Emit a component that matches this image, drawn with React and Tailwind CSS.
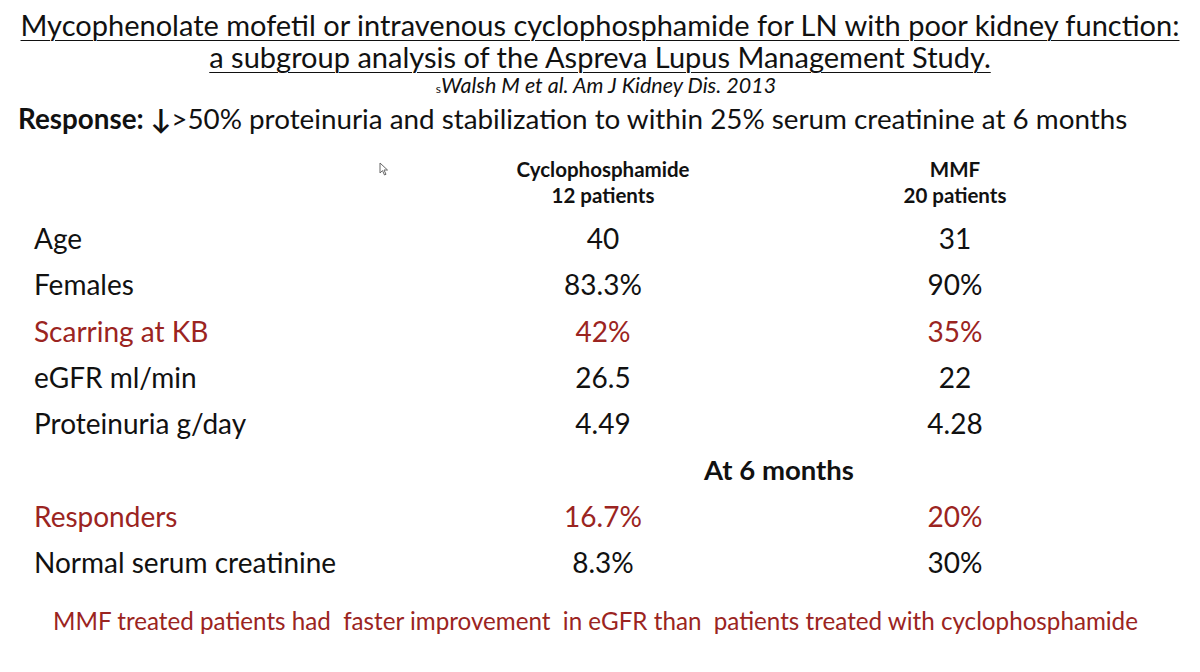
import React from 'react';

const RED = 'text-[#9b2421]';

const rows = [
  { label: 'Age', a: '40', b: '31' },
  { label: 'Females', a: '83.3%', b: '90%' },
  { label: 'Scarring at KB', a: '42%', b: '35%', red: true },
  { label: 'eGFR ml/min', a: '26.5', b: '22' },
  { label: 'Proteinuria g/day', a: '4.49', b: '4.28' },
];

const later = [
  { label: 'Responders', a: '16.7%', b: '20%', red: true },
  { label: 'Normal serum creatinine', a: '8.3%', b: '30%' },
];

function Row({ row }) {
  const color = row.red ? RED : 'text-[#111]';
  return (
    <div className={`grid grid-cols-[340px_246px_246px] gap-x-[106px] h-[46.3px] items-center text-[28px] ${color}`}>
      <span className="whitespace-nowrap">{row.label}</span>
      <span className="text-center">{row.a}</span>
      <span className="text-center">{row.b}</span>
    </div>
  );
}

export default function App() {
  return (
    <div className="relative w-[1200px] h-[672px] bg-white overflow-hidden text-[#111]" style={{ fontFamily: 'Lato, "Open Sans", sans-serif' }}>
      {/* Title */}
      <div className="pt-[9px] text-center text-[29px] leading-[32px] underline decoration-1 underline-offset-[4px]">
        <p>Mycophenolate mofetil or intravenous cyclophosphamide for LN with poor kidney function:</p>
        <p>a subgroup analysis of the Aspreva Lupus Management Study.</p>
      </div>
      <p className="text-center text-[21.5px] leading-[25px] italic pl-[12px]">
        <span className="not-italic text-[12px]">s</span>Walsh M et al. Am J Kidney Dis. 2013
      </p>

      {/* Response definition */}
      <p className="pl-[18px] mt-[2px] text-[27.8px] leading-[32px] whitespace-nowrap">
        <span className="font-bold">Response: </span>
        <span className="font-bold">↓</span>&gt;50% proteinuria and stabilization to within 25% serum creatinine at 6 months
      </p>

      {/* cursor */}
      <svg className="absolute left-[379px] top-[162px]" width="10" height="15" viewBox="0 0 10 15">
        <path d="M1 1 L1 11 L3.5 8.6 L5.5 13 L7 12.3 L5 8 L8.5 8 Z" fill="white" stroke="#666" strokeWidth="1" />
      </svg>

      {/* Table */}
      <div className="pl-[34px] mt-[21px]">
        <div className="grid grid-cols-[340px_246px_246px] gap-x-[106px] text-[20.5px] leading-[26px] font-bold">
          <span />
          <div className="text-center">
            <p>Cyclophosphamide</p>
            <p>12 patients</p>
          </div>
          <div className="text-center">
            <p>MMF</p>
            <p>20 patients</p>
          </div>
        </div>
        <div className="mt-[7px]">
          {rows.map((r) => (
            <Row key={r.label} row={r} />
          ))}
          <div className="grid grid-cols-[446px_598px] h-[46.3px] items-center">
            <span />
            <span className="text-center font-bold text-[27.5px]">At 6 months</span>
          </div>
          {later.map((r) => (
            <Row key={r.label} row={r} />
          ))}
        </div>
      </div>

      {/* Footer note */}
      <p className={`mt-[22px] pl-[53px] text-[24.2px] leading-[28px] whitespace-pre ${RED}`}>
        MMF treated patients had  faster improvement  in eGFR than  patients treated with cyclophosphamide
      </p>
    </div>
  );
}
